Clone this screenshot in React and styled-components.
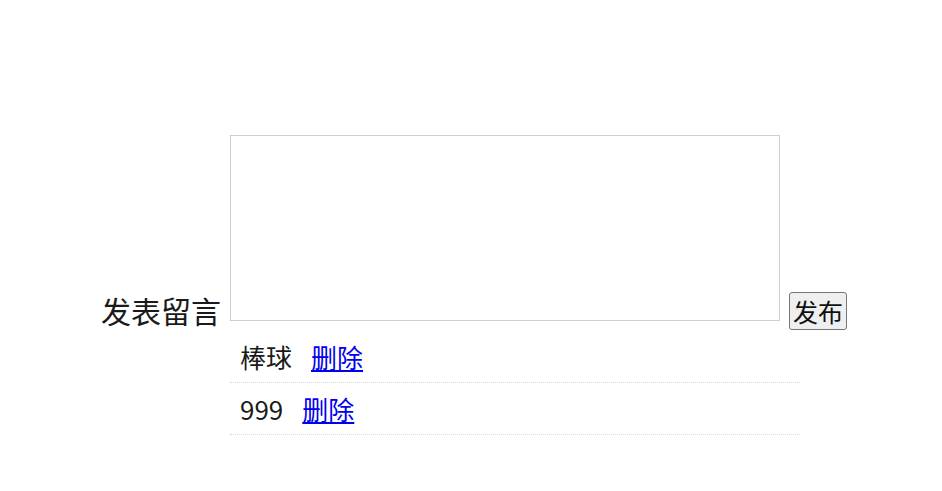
import React, { useState } from "react";
import styled, { createGlobalStyle } from "styled-components";

const GlobalStyle = createGlobalStyle`
  html, body {
    margin: 0;
    background: #fff;
  }
  body {
    font-family: "Noto Sans CJK SC", "Noto Sans", sans-serif;
    color: #1a1a1a;
  }
`;

const Page = styled.div`
  padding-top: 135px;
  padding-left: 100px;
`;

const Board = styled.div`
  display: grid;
  grid-template-columns: auto 550px auto;
  column-gap: 9px;
  align-items: end;
  justify-content: start;
`;

const Label = styled.label`
  font-size: 30px;
  line-height: 1;
  margin-bottom: -4px;
  padding-left: 1px;
`;

const Editor = styled.textarea`
  display: block;
  box-sizing: border-box;
  width: 550px;
  height: 186px;
  border: 1px solid #cfcfcf;
  resize: none;
  outline: none;
  font-family: inherit;
  font-size: 16px;
`;

const PublishButton = styled.button`
  font-family: inherit;
  font-size: 25px;
  line-height: 34px;
  padding: 1px 3px;
  border: 1px solid #767676;
  border-radius: 3px;
  background: #efefef;
  color: #111;
  margin-bottom: -9px;
`;

const List = styled.ul`
  grid-column: 2 / span 2;
  list-style: none;
  margin: 0;
  padding: 0;
  width: 570px;
  margin-top: 10px;
`;

const Item = styled.li`
  display: flex;
  align-items: center;
  height: 52px;
  padding: 0 10px;
  box-sizing: border-box;
  border-bottom: 1px dotted #d8d8d8;
  font-size: 26px;
`;

const DeleteLink = styled.a`
  color: #0000ee;
  text-decoration: underline;
  margin-left: 19px;
  cursor: pointer;
`;

export default function App() {
  const [text, setText] = useState("");
  const [items, setItems] = useState(["棒球", "999"]);

  return (
    <Page>
      <GlobalStyle />
      <Board>
        <Label>发表留言</Label>
        <Editor value={text} onChange={(e) => setText(e.target.value)} />
        <PublishButton
          onClick={() => {
            if (text.trim()) setItems([...items, text]);
            setText("");
          }}
        >
          发布
        </PublishButton>
        <List>
          {items.map((item, i) => (
            <Item key={i}>
              {item}
              <DeleteLink onClick={() => setItems(items.filter((_, j) => j !== i))}>
                删除
              </DeleteLink>
            </Item>
          ))}
        </List>
      </Board>
    </Page>
  );
}
